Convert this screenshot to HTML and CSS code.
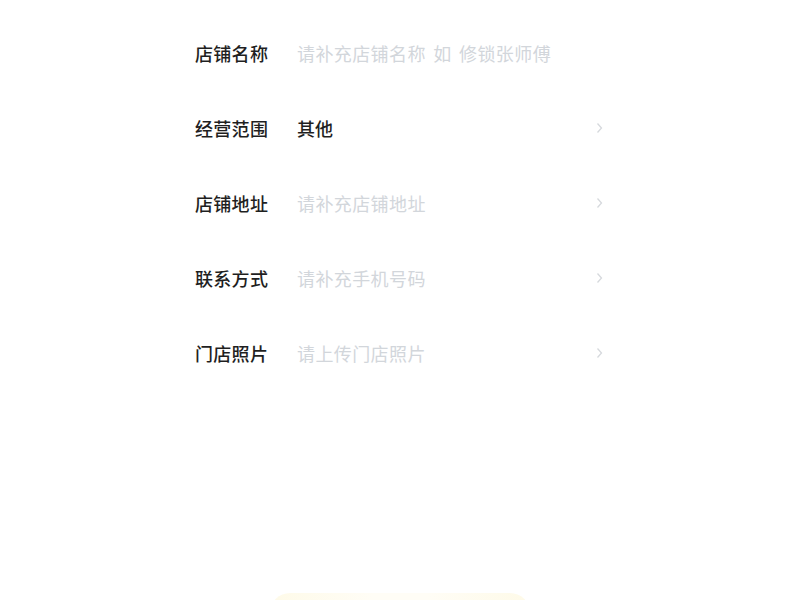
FILE: index.html
```html
<!DOCTYPE html>
<html lang="zh">
<head>
<meta charset="utf-8">
<link rel="stylesheet" href="styles.css">
</head>
<body>
<div class="page">
  <div class="form">
    <div class="row">
      <span class="label">店铺名称</span>
      <span class="value placeholder">请补充店铺名称 如 修锁张师傅</span>
    </div>
    <div class="row">
      <span class="label">经营范围</span>
      <span class="value">其他</span>
      <svg class="chev" viewBox="0 0 7 12" width="7" height="12"><path d="M1.5 1.5 L5.5 6 L1.5 10.5" fill="none" stroke="#d6d9dd" stroke-width="1.3"/></svg>
    </div>
    <div class="row">
      <span class="label">店铺地址</span>
      <span class="value placeholder">请补充店铺地址</span>
      <svg class="chev" viewBox="0 0 7 12" width="7" height="12"><path d="M1.5 1.5 L5.5 6 L1.5 10.5" fill="none" stroke="#d6d9dd" stroke-width="1.3"/></svg>
    </div>
    <div class="row">
      <span class="label">联系方式</span>
      <span class="value placeholder">请补充手机号码</span>
      <svg class="chev" viewBox="0 0 7 12" width="7" height="12"><path d="M1.5 1.5 L5.5 6 L1.5 10.5" fill="none" stroke="#d6d9dd" stroke-width="1.3"/></svg>
    </div>
    <div class="row">
      <span class="label">门店照片</span>
      <span class="value placeholder">请上传门店照片</span>
      <svg class="chev" viewBox="0 0 7 12" width="7" height="12"><path d="M1.5 1.5 L5.5 6 L1.5 10.5" fill="none" stroke="#d6d9dd" stroke-width="1.3"/></svg>
    </div>
  </div>
  <div class="spacer"></div>
  <div class="footer">
    <div class="btn"></div>
  </div>
</div>
</body>
</html>
```

FILE: styles.css
```css
html, body {
  margin: 0;
  padding: 0;
  background: #ffffff;
}
body {
  font-family: "Noto Sans CJK SC", "Noto Sans", sans-serif;
  overflow: hidden;
}
.page {
  width: 800px;
  height: 600px;
  display: flex;
  flex-direction: column;
  overflow: hidden;
}
.form {
  width: 410px;
  margin: 0 auto;
  padding-top: 15px;
  display: flex;
  flex-direction: column;
}
.row {
  height: 75px;
  display: flex;
  align-items: center;
}
.label {
  width: 102px;
  font-size: 18px;
  font-weight: 500;
  color: #1f1f1f;
  letter-spacing: 0.3px;
}
.value {
  flex: 1;
  font-size: 18px;
  color: #1f1f1f;
  font-weight: 500;
}
.placeholder {
  color: #d2d6db;
  font-weight: 400;
  letter-spacing: 0.4px;
  word-spacing: 3px;
}
.chev {
  margin-right: 2px;
}
.spacer {
  flex: 1;
}
.footer {
  display: flex;
  justify-content: center;
  height: 7px;
  overflow: hidden;
}
.btn {
  width: 260px;
  height: 40px;
  border-radius: 20px;
  background: linear-gradient(90deg, #fefae8, #fffdf6 40%, #fffdf6 60%, #fefae8);
}
```
